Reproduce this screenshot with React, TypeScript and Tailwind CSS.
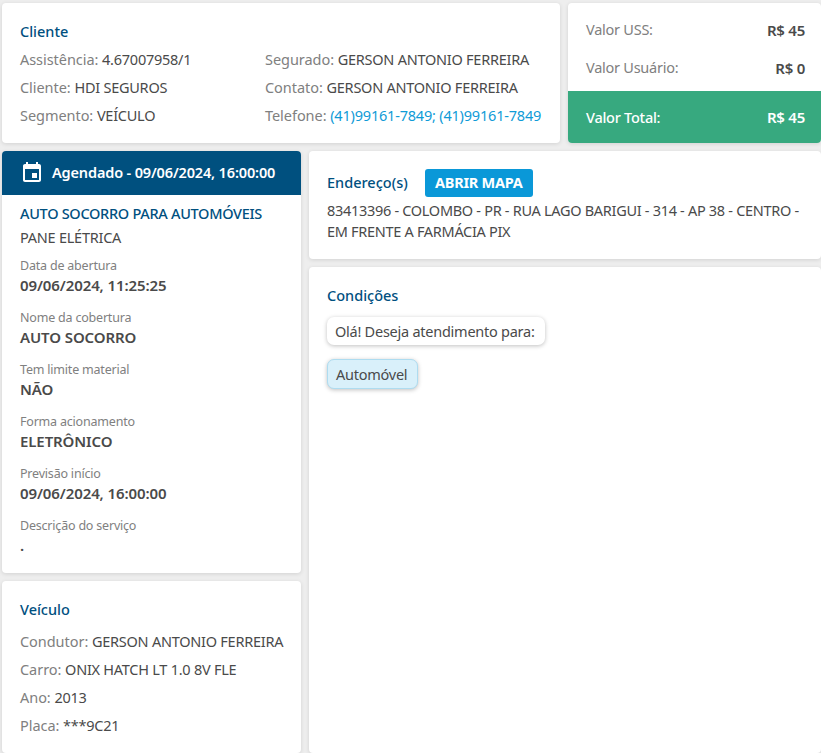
const shadow = 'shadow-[0_1px_4px_rgba(0,0,0,0.12)]'
const cardClass = `rounded-[4px] bg-white ${shadow}`

function Line({ label, children }: { label: string; children: React.ReactNode }) {
  return (
    <p className="h-7 leading-7 whitespace-nowrap text-[#808080]">
      <span className="tracking-[-0.05px]">{label}: </span>
      <span className="text-[#4a4a4a]">{children}</span>
    </p>
  )
}

function Detail({ label, value }: { label: string; value: string }) {
  return (
    <div className="h-[52px]">
      <p className="h-[19px] text-[12.5px] leading-[21px] tracking-[-0.2px] text-[#808080]">{label}</p>
      <p className="h-[22px] text-[15px] leading-[22px] font-semibold tracking-[-0.1px] text-[#4a4a4a]">{value}</p>
    </div>
  )
}

export default function App() {
  return (
    <div
      className="flex h-[753px] flex-col gap-2 overflow-hidden bg-[#eeeeee] pt-[3px] pl-[2px] text-[14.5px] tracking-[-0.25px]"
      style={{ fontFamily: '"Noto Sans", "Lato", sans-serif' }}
    >
      <section className="flex h-[140px] shrink-0 gap-2">
        <div className={`w-[558px] px-[18px] pt-[17px] ${cardClass}`}>
          <h2 className="h-[22px] leading-[22px] font-medium tracking-normal text-[#00507f]">Cliente</h2>
          <div className="mt-[3px] flex">
            <div className="w-[245px] shrink-0">
              <Line label="Assistência">4.67007958/1</Line>
              <Line label="Cliente">HDI SEGUROS</Line>
              <Line label="Segmento">VEÍCULO</Line>
            </div>
            <div>
              <Line label="Segurado">GERSON ANTONIO FERREIRA</Line>
              <Line label="Contato">GERSON ANTONIO FERREIRA</Line>
              <Line label="Telefone">
                <span className="tracking-[-0.2px] text-[#0f9bd7]">(41)99161-7849; (41)99161-7849</span>
              </Line>
            </div>
          </div>
        </div>
        <div className={`flex flex-1 flex-col overflow-hidden ${cardClass}`}>
          <div className="flex-1 pt-[8px] pr-[16px] pl-[18px]">
            <div className="flex h-[38px] items-center justify-between text-[#808080]">
              <span>Valor USS:</span>
              <span className="text-[15px] font-semibold text-[#4a4a4a]">R$ 45</span>
            </div>
            <div className="flex h-[38px] items-center justify-between text-[#808080]">
              <span>Valor Usuário:</span>
              <span className="text-[15px] font-semibold text-[#4a4a4a]">R$ 0</span>
            </div>
          </div>
          <div className="flex h-[52px] items-center justify-between bg-[#37a97f] pt-[1px] pr-[16px] pl-[18px] text-white">
            <span className="font-medium">Valor Total:</span>
            <span className="text-[15px] font-semibold">R$ 45</span>
          </div>
        </div>
      </section>

      <section className="flex min-h-0 flex-1 gap-2">
        <div className="flex w-[299px] shrink-0 flex-col gap-2">
          <div className={`h-[422px] shrink-0 overflow-hidden ${cardClass}`}>
            <div className="flex h-11 items-center gap-[8px] bg-[#00507f] pl-[18px] font-semibold tracking-[-0.15px] text-white">
              <svg width="24" height="24" viewBox="0 0 24 24" fill="currentColor">
                <path d="M17 12h-5v5h5v-5zM16 1v2H8V1H6v2H5c-1.11 0-1.99.9-1.99 2L3 19c0 1.1.89 2 2 2h14c1.1 0 2-.9 2-2V5c0-1.1-.9-2-2-2h-1V1h-2zm3 18H5V8h14v11z" />
              </svg>
              <span>Agendado - 09/06/2024, 16:00:00</span>
            </div>
            <div className="px-[18px] pt-[7px]">
              <p className="h-[22px] leading-[22px] font-medium tracking-[-0.3px] text-[#00507f]">AUTO SOCORRO PARA AUTOMÓVEIS</p>
              <p className="mb-[7px] h-[24px] leading-[26px] text-[#4a4a4a]">PANE ELÉTRICA</p>
              <Detail label="Data de abertura" value="09/06/2024, 11:25:25" />
              <Detail label="Nome da cobertura" value="AUTO SOCORRO" />
              <Detail label="Tem limite material" value="NÃO" />
              <Detail label="Forma acionamento" value="ELETRÔNICO" />
              <Detail label="Previsão início" value="09/06/2024, 16:00:00" />
              <Detail label="Descrição do serviço" value="." />
            </div>
          </div>
          <div className={`flex-1 px-[18px] pt-[17px] ${cardClass}`}>
            <h2 className="h-[22px] leading-[22px] font-medium tracking-normal text-[#00507f]">Veículo</h2>
            <div className="mt-[7px]">
              <Line label="Condutor">GERSON ANTONIO FERREIRA</Line>
              <Line label="Carro">ONIX HATCH LT 1.0 8V FLE</Line>
              <Line label="Ano">2013</Line>
              <Line label="Placa">***9C21</Line>
            </div>
          </div>
        </div>

        <div className="flex min-w-0 flex-1 flex-col gap-2">
          <div className={`h-[108px] shrink-0 px-[18px] pt-[18px] ${cardClass}`}>
            <div className="flex h-7 items-center gap-4">
              <h2 className="w-[82px] font-medium tracking-normal whitespace-nowrap text-[#00507f]">Endereço(s)</h2>
              <button className="h-7 rounded-[3px] bg-[#0a98d8] px-[10px] font-bold text-white">ABRIR MAPA</button>
            </div>
            <p className="mt-[3px] leading-[21px] tracking-[-0.3px] text-[#4a4a4a]">
              83413396 - COLOMBO - PR - RUA LAGO BARIGUI - 314 - AP 38 - CENTRO - EM FRENTE A FARMÁCIA PIX
            </p>
          </div>
          <div className={`flex-1 px-[18px] pt-[17px] ${cardClass}`}>
            <h2 className="h-[22px] leading-[22px] font-medium tracking-normal text-[#00507f]">Condições</h2>
            <div className="mt-[11px] flex flex-col items-start gap-[14px]">
              <div className="h-7 rounded-[7px] bg-white pr-[10px] pl-[8px] leading-7 text-[#4a4a4a] shadow-[0_1px_4px_rgba(0,0,0,0.25)]">
                Olá! Deseja atendimento para:
              </div>
              <div className="h-[30px] rounded-[7px] border border-[#aedcf0] bg-[#d9f0fa] pr-[10px] pl-[8px] leading-7 text-[#4a4a4a] shadow-[0_1px_4px_rgba(0,0,0,0.25)]">
                Automóvel
              </div>
            </div>
          </div>
        </div>
      </section>
    </div>
  )
}
